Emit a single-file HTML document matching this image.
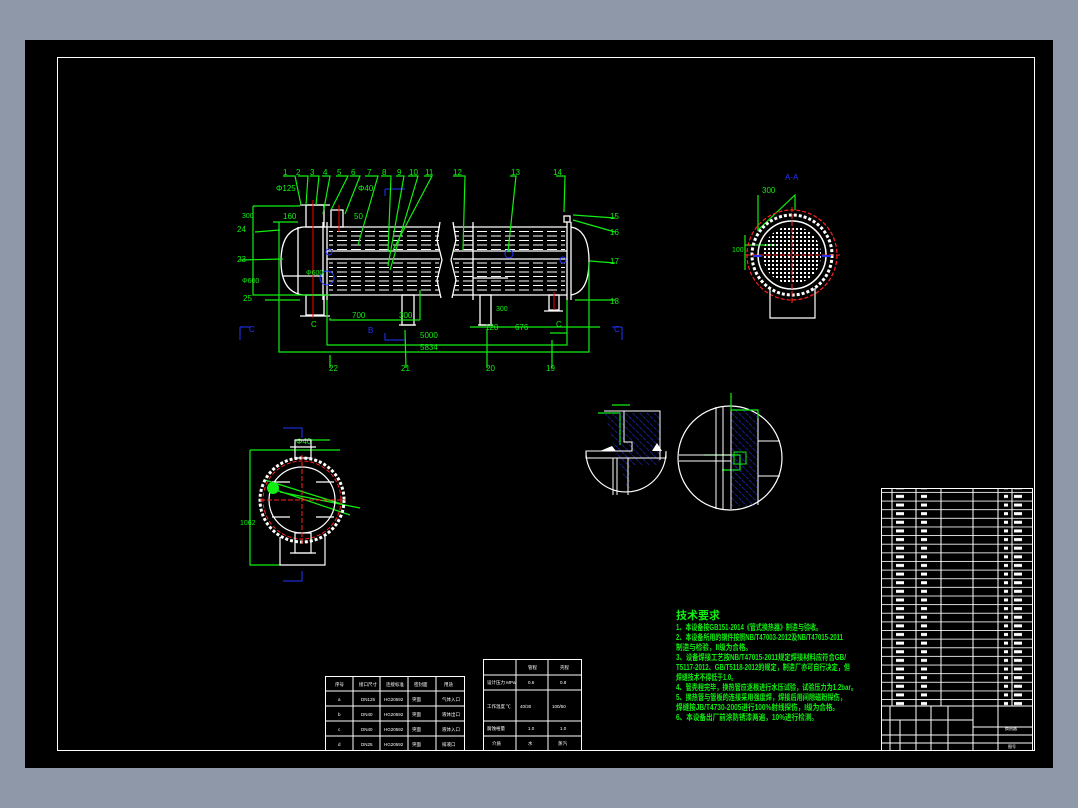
<!DOCTYPE html>
<html><head><meta charset="utf-8"><style>
html,body{margin:0;padding:0;background:#8e98a8;}
svg{display:block}
text{font-family:"Liberation Sans","Noto Sans CJK SC",sans-serif;}
</style></head><body>
<svg width="1078" height="808" viewBox="0 0 1078 808" xmlns="http://www.w3.org/2000/svg">
<defs>
<pattern id="tubes" width="14" height="4.5" patternUnits="userSpaceOnUse">
<line x1="1" y1="2" x2="11" y2="2" stroke="#fff" stroke-width="1"/>
</pattern>
<pattern id="rows" width="200" height="8.63" patternUnits="userSpaceOnUse">
<line x1="0" y1="0.5" x2="200" y2="0.5" stroke="#fff" stroke-width="0.8"/>
<rect x="4" y="3" width="4" height="3" fill="#fff"/>
<rect x="14" y="3" width="8" height="3" fill="#fff"/>
<rect x="38" y="3" width="12" height="3" fill="#fff"/>
<rect x="69" y="3" width="3" height="3" fill="#fff"/>
<rect x="96" y="3" width="8" height="3" fill="#fff"/>
<rect x="121" y="3" width="6" height="3" fill="#fff"/>
</pattern>
<pattern id="hatch" width="5" height="5" patternUnits="userSpaceOnUse" patternTransform="rotate(-45)">
<line x1="0" y1="0" x2="0" y2="5" stroke="#2233dd" stroke-width="1.2" stroke-dasharray="3 1"/>
</pattern>
<pattern id="dots" width="4" height="4" patternUnits="userSpaceOnUse">
<rect x="0" y="0" width="2" height="2" fill="#fff"/>
</pattern>
</defs>
<rect x="25" y="40" width="1028" height="728" fill="#000"/>
<rect x="57.5" y="57.5" width="977" height="693" fill="none" stroke="#fff" stroke-width="1"/>

<!-- main shell -->
<g stroke="#fff" fill="none" stroke-width="1.3">
<path d="M327 227 L303 227 Q281 230 281 261 Q281 292 303 295 L327 295"/>
<line x1="327" y1="222" x2="327" y2="300"/>
<line x1="323" y1="222" x2="323" y2="300"/>
<line x1="327" y1="227" x2="440" y2="227"/>
<line x1="327" y1="295" x2="440" y2="295"/>
<line x1="453" y1="227" x2="567" y2="227"/>
<line x1="453" y1="295" x2="567" y2="295"/>
<path d="M440 222 L437 240 L442 260 L437 280 L441 298"/>
<path d="M453 222 L456 240 L451 260 L456 280 L452 298"/>
<line x1="567" y1="222" x2="567" y2="300"/>
<line x1="571" y1="222" x2="571" y2="300"/>
<path d="M571 227 Q589 230 589 261 Q589 292 571 295"/>
<line x1="327" y1="251" x2="440" y2="251"/><line x1="327" y1="259" x2="440" y2="259"/>
<line x1="453" y1="251" x2="567" y2="251"/><line x1="453" y1="259" x2="567" y2="259"/>
<line x1="298" y1="227" x2="298" y2="295"/>
<line x1="283" y1="276" x2="323" y2="276"/>
<rect x="306" y="205" width="18" height="22"/><line x1="300" y1="205" x2="330" y2="205"/>
<rect x="306" y="295" width="18" height="20"/><line x1="300" y1="316" x2="330" y2="316"/>
<rect x="331" y="210" width="12" height="17"/>
<rect x="402" y="295" width="12" height="30"/><line x1="399" y1="325" x2="416" y2="325"/>
<rect x="480" y="295" width="11" height="30"/><line x1="478" y1="325" x2="493" y2="325"/>
<rect x="549" y="295" width="10" height="15"/><line x1="544" y1="311" x2="563" y2="311"/>
<rect x="564" y="216" width="6" height="6"/>
<line x1="473" y1="222" x2="473" y2="300"/>
<line x1="473" y1="278" x2="508" y2="278"/>
</g>
<rect x="329" y="229" width="110" height="21" fill="url(#tubes)"/>
<rect x="329" y="261" width="110" height="33" fill="url(#tubes)"/>
<rect x="455" y="229" width="110" height="21" fill="url(#tubes)"/>
<rect x="455" y="261" width="110" height="33" fill="url(#tubes)"/>
<g stroke="#f00" stroke-width="1"><line x1="313" y1="200" x2="313" y2="318"/><line x1="339" y1="205" x2="339" y2="232"/><line x1="554" y1="292" x2="554" y2="310"/></g>
<g stroke="#23f" fill="none" stroke-width="1"><circle cx="329" cy="252" r="3"/><circle cx="327" cy="278" r="7"/><circle cx="509" cy="254" r="4"/><circle cx="563" cy="260" r="3"/>
<path d="M240 327 L250 327 M240 327 L240 340 M612 327 L622 327 M622 327 L622 340 M385 189 L405 189 M385 189 L385 196 M385 333 L385 340 L405 340"/></g>
<g fill="#23f" font-size="8"><text x="249" y="332">C</text><text x="614" y="332">C</text><text x="368" y="333">B</text><text x="785" y="180">A-A</text></g>

<g stroke="#1e1" fill="none" stroke-width="1.2">
<path d="M283 176 L295 176 L301 205 M298 176 L308 176 L306 205 M310 176 L319 176 L316 205 M322 176 L330 176 L323 214 M336 176 L348 176 L331 210 M350 176 L360 176 L345 214 M365 176 L378 176 L358 245 M381 176 L391 176 L388 252 M396 176 L404 176 L388 266 M408 176 L418 176 L390 270 M424 176 L432 176 L393 250"/>
<path d="M453 176 L465 176 L463 250 M510 176 L516 176 L508 252 M556 176 L565 176 L564 212"/>
<path d="M253 206 L253 295 L330 295 M253 206 L300 206 M273 222 L298 222 M255 232 L280 230 M240 260 L283 259 M265 300 L300 300"/>
<path d="M279 222 L279 352 L589 352 L589 262 M327 300 L327 345 L567 345 L567 300"/>
<path d="M330 318 L330 320 L420 320 M420 290 L420 320 M470 327 L600 327 M550 333 L567 333"/>
<path d="M330 355 L330 368 M405 330 L406 368 M487 330 L487 368 M552 340 L552 368 M573 215 L615 218 M573 220 L615 232 M590 261 L615 263 M575 300 L615 300"/>
<path d="M758 195 L758 230 L795 195 L795 210 M745 245 L775 245 M745 235 L745 270"/>
<path d="M250 450 L250 565 L280 565 M250 450 L340 450 M295 440 L330 440 M265 480 L345 505 M270 488 L350 515 M280 492 L360 508"/>
<path d="M598 413 L608 413 L620 413 L620 445 M612 405 L630 405 M704 455 L740 455 L740 470 L722 470"/>
</g>
<g fill="#1e1" font-size="8">
<text x="283" y="175">1</text><text x="296" y="175">2</text><text x="310" y="175">3</text><text x="323" y="175">4</text><text x="337" y="175">5</text><text x="351" y="175">6</text><text x="367" y="175">7</text><text x="382" y="175">8</text><text x="397" y="175">9</text><text x="409" y="175">10</text><text x="425" y="175">11</text>
<text x="453" y="175">12</text><text x="511" y="175">13</text><text x="553" y="175">14</text>
<text x="276" y="191">Φ125</text><text x="358" y="191">Φ40</text><text x="283" y="219">160</text><text x="242" y="218" font-size="7">300</text><text x="354" y="219">50</text>
<text x="237" y="232">24</text><text x="237" y="262">23</text><text x="242" y="283" font-size="7">Φ600</text><text x="243" y="301">25</text><text x="306" y="275" font-size="7">Φ600</text>
<text x="352" y="318">700</text><text x="399" y="318">300</text><text x="485" y="330">120</text><text x="515" y="330">676</text><text x="496" y="311" font-size="7">300</text>
<text x="420" y="338">5000</text><text x="420" y="350">5834</text>
<text x="329" y="371">22</text><text x="401" y="371">21</text><text x="486" y="371">20</text><text x="546" y="371">19</text>
<text x="610" y="219">15</text><text x="610" y="235">16</text><text x="610" y="264">17</text><text x="610" y="304">18</text>
<text x="311" y="327">C</text><text x="556" y="327">C</text>
<text x="762" y="193">300</text><text x="732" y="252" font-size="7">100</text>
<text x="296" y="444">Φ40</text><text x="240" y="525" font-size="7">1062</text>
</g>

<g fill="none">
<circle cx="792" cy="255" r="45" stroke="#f22" stroke-width="1.2" stroke-dasharray="4 2"/>
<circle cx="792" cy="255" r="40" stroke="#fff" stroke-width="3" stroke-dasharray="3 2"/>
<circle cx="792" cy="255" r="34" stroke="#fff" stroke-width="1.5"/>
<circle cx="792" cy="255" r="29" fill="url(#dots)"/>
<path d="M770 288 L770 318 L815 318 L815 288" stroke="#fff" stroke-width="1.2"/>
<line x1="792" y1="207" x2="792" y2="305" stroke="#f22" stroke-dasharray="5 2"/>
<line x1="745" y1="255" x2="840" y2="255" stroke="#f22" stroke-dasharray="5 2"/>
<line x1="753" y1="256" x2="762" y2="256" stroke="#23f" stroke-width="2"/><line x1="822" y1="256" x2="831" y2="256" stroke="#23f" stroke-width="2"/>
</g>

<g fill="none">
<circle cx="302" cy="500" r="42" stroke="#fff" stroke-width="3" stroke-dasharray="3 2"/>
<circle cx="302" cy="500" r="39" stroke="#f22" stroke-width="1" stroke-dasharray="4 2"/>
<circle cx="302" cy="500" r="33" stroke="#fff" stroke-width="1.2"/>
<g stroke="#fff" stroke-width="1.2">
<rect x="295" y="440" width="16" height="18"/><line x1="290" y1="447" x2="316" y2="447"/>
<path d="M280 537 L280 565 L325 565 L325 537"/><rect x="295" y="533" width="16" height="20"/><line x1="290" y1="553" x2="316" y2="553"/>
<line x1="272" y1="482" x2="290" y2="482"/><line x1="316" y1="482" x2="334" y2="482"/><line x1="272" y1="517" x2="290" y2="517"/><line x1="316" y1="517" x2="334" y2="517"/>
</g>
<line x1="302" y1="455" x2="302" y2="545" stroke="#f22" stroke-dasharray="5 2"/>
<line x1="260" y1="500" x2="345" y2="500" stroke="#f22" stroke-dasharray="5 2"/>
<path d="M283 428 L302 428 L302 438 M283 581 L302 581 L302 571" stroke="#23f"/>
<circle cx="273" cy="488" r="6" fill="#1e1" stroke="none"/>
</g>

<g>
<path d="M604 413 L660 413 L660 465 L630 465 L630 497" fill="url(#hatch)"/>
<path d="M586 452 A40 40 0 0 0 666 452" fill="none" stroke="#fff" stroke-width="1.2"/>
<g stroke="#fff" stroke-width="1" fill="none">
<path d="M604 411 L660 411 L660 460 M624 411 L624 442 L632 442 L632 451 L586 451 L586 458 L666 458 L666 451 M613 458 L613 495 M617 458 L617 495 M628 458 L628 495"/>
</g>
<path d="M600 451 L612 446 L616 451 Z M652 451 L657 443 L662 451Z" fill="#fff"/>
<circle cx="730" cy="458" r="52" fill="none" stroke="#fff" stroke-width="1.2"/>
<rect x="731" y="408" width="26" height="98" fill="url(#hatch)"/>
<g stroke="#fff" stroke-width="1" fill="none">
<line x1="716" y1="407" x2="716" y2="509"/><line x1="723" y1="407" x2="723" y2="509"/><line x1="731" y1="407" x2="731" y2="509"/><line x1="758" y1="415" x2="758" y2="505"/>
<line x1="679" y1="455" x2="731" y2="455"/><line x1="679" y1="461" x2="731" y2="461"/><line x1="758" y1="441" x2="780" y2="441"/><line x1="758" y1="476" x2="780" y2="476"/>
</g>
<path d="M731 393 L731 410 L758 410 L758 418" fill="none" stroke="#1e1" stroke-width="1.2"/>
<rect x="734" y="452" width="12" height="12" fill="none" stroke="#1e1"/>
</g>

<g stroke="#fff" stroke-width="1" fill="none">
<rect x="325.5" y="676.5" width="139" height="74"/>
<path d="M353 676V751M380 676V751M408 676V751M436 676V751M325 691H464M325 706H464M325 721H464M325 736H464"/>
<rect x="483.5" y="659.5" width="98" height="91"/>
<path d="M516 659V751M548 659V751M483 675H582M483 690H582M483 721H582M483 736H582"/>
</g>
<g fill="#fff" font-size="4.5">
<text x="335" y="686">序号</text><text x="359" y="686">接口尺寸</text><text x="386" y="686">连接标准</text><text x="414" y="686">密封面</text><text x="444" y="686">用途</text>
<text x="338" y="701">a</text><text x="361" y="701">DN125</text><text x="384" y="701">HG20592</text><text x="412" y="701">突面</text><text x="442" y="701">气体入口</text>
<text x="338" y="716">b</text><text x="361" y="716">DN40</text><text x="384" y="716">HG20592</text><text x="412" y="716">突面</text><text x="442" y="716">液体出口</text>
<text x="338" y="731">c</text><text x="361" y="731">DN40</text><text x="384" y="731">HG20592</text><text x="412" y="731">突面</text><text x="442" y="731">液体入口</text>
<text x="338" y="746">d</text><text x="361" y="746">DN25</text><text x="384" y="746">HG20592</text><text x="412" y="746">突面</text><text x="442" y="746">排液口</text>
<text x="528" y="669">管程</text><text x="560" y="669">壳程</text>
<text x="487" y="684">设计压力 MPa</text><text x="528" y="684">0.6</text><text x="560" y="684">0.8</text>
<text x="487" y="708">工作温度 ℃</text><text x="520" y="708">40/30</text><text x="552" y="708">100/50</text>
<text x="487" y="730">腐蚀裕量</text><text x="528" y="730">1.0</text><text x="560" y="730">1.0</text>
<text x="492" y="745">介质</text><text x="528" y="745">水</text><text x="558" y="745">蒸汽</text>
</g>

<g fill="#1e1" font-size="8" font-weight="bold" lengthAdjust="spacingAndGlyphs">
<text x="676" y="619" font-size="11" textLength="44" lengthAdjust="spacingAndGlyphs">技术要求</text>
<text x="676" y="630" textLength="146" lengthAdjust="spacingAndGlyphs">1、本设备按GB151-2014《管式换热器》制造与验收。</text>
<text x="676" y="640" textLength="167" lengthAdjust="spacingAndGlyphs">2、本设备所用的钢件按照NB/T47003-2012及NB/T47015-2011</text>
<text x="676" y="650" textLength="76" lengthAdjust="spacingAndGlyphs">制造与检验，II级为合格。</text>
<text x="676" y="660" textLength="170" lengthAdjust="spacingAndGlyphs">3、设备焊接工艺按NB/T47015-2011规定焊接材料应符合GB/</text>
<text x="676" y="670" textLength="174" lengthAdjust="spacingAndGlyphs">T5117-2012、GB/T5118-2012的规定，制造厂亦可自行决定，但</text>
<text x="676" y="680" textLength="61" lengthAdjust="spacingAndGlyphs">焊缝技术不得低于1.0。</text>
<text x="676" y="690" textLength="181" lengthAdjust="spacingAndGlyphs">4、管壳程完毕，换热管应逐根进行水压试验，试验压力为1.2bar。</text>
<text x="676" y="700" textLength="170" lengthAdjust="spacingAndGlyphs">5、换热管与管板的连接采用强度焊，焊接后用间隙磁粉探伤，</text>
<text x="676" y="710" textLength="163" lengthAdjust="spacingAndGlyphs">焊缝按JB/T4730-2005进行100%射线探伤，I级为合格。</text>
<text x="676" y="720" textLength="142" lengthAdjust="spacingAndGlyphs">6、本设备出厂前涂防锈漆两遍，10%进行检测。</text>
</g>

<g stroke="#fff" stroke-width="1" fill="none">
<rect x="881.5" y="488.5" width="151" height="262"/>
<path d="M892 488V706M916 488V706M941 488V706M973 488V706M998 488V706M1012 488V706"/>
<path d="M881 706H1033M881 720H973M881 735H1033M881 743H973M973 727H1033M973 743H1033M948 706V751M973 706V751M998 706V751"/>
<path d="M890 706V751M900 720V751M916 706V751M931 706V751"/>
</g>
<rect x="882" y="488" width="150" height="218" fill="url(#rows)"/>
<g fill="#fff" font-size="4"><text x="1005" y="730">换热器</text><text x="1008" y="748">图号</text></g>
</svg>
</body></html>
